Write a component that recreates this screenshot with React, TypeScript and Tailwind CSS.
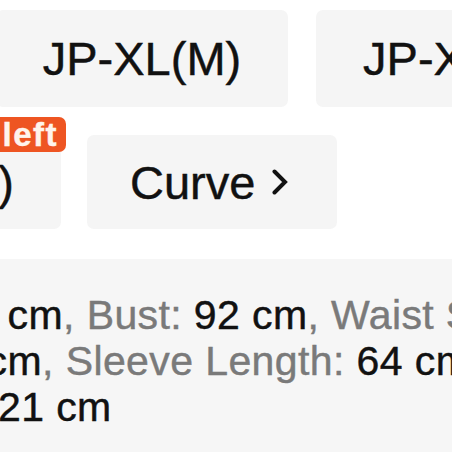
import { ReactNode } from "react";

const SANS = "font-['Liberation_Sans',Arial,Helvetica,sans-serif]";

function Label({ children }: { children: ReactNode }) {
  return <span className="text-[#7a7a7a]">{children}</span>;
}

function Value({ children }: { children: ReactNode }) {
  return <span className="text-[#111]">{children}</span>;
}

function SizeButton({ label, className = "" }: { label: string; className?: string }) {
  return (
    <div
      className={`shrink-0 flex items-center justify-center rounded-[7px] bg-[#f5f5f5] text-[47px] leading-none text-[#111] ${className}`}
    >
      {label}
    </div>
  );
}

function Chevron() {
  return (
    <svg width="16" height="26" viewBox="0 0 16 26" fill="none">
      <polyline
        points="2.5,2.5 13,13 2.5,23.5"
        stroke="#111"
        strokeWidth="4"
        strokeLinecap="round"
        strokeLinejoin="miter"
      />
    </svg>
  );
}

export default function App() {
  return (
    <div
      className={`w-[452px] h-[452px] overflow-hidden bg-white ${SANS} [-webkit-text-stroke:0.45px_currentColor]`}
    >
      <div className="pt-[10px] flex flex-col gap-[28px]">
        {/* size row */}
        <div className="flex gap-[28px] -ml-[4px]">
          <SizeButton label="JP-XL(M)" className="w-[292px] h-[97px]" />
          <SizeButton label="JP-XXL(L)" className="w-[311px] h-[97px]" />
        </div>

        {/* second row: low-stock size + curve link */}
        <div className="flex gap-[26px] -ml-[250px]">
          <div className="relative shrink-0">
            <SizeButton label="JP-XXL(L)" className="w-[311px] h-[94px]" />
            <span className="absolute -top-[18px] -right-[5px] h-[35px] flex items-center rounded-[7px] bg-[#ee5522] pl-[9px] pr-[8px] text-[33px] font-bold leading-none tracking-[1.5px] text-[#fff4ec] whitespace-nowrap">
              Only 1 left
            </span>
          </div>
          <div className="shrink-0 w-[250px] h-[94px] flex items-center gap-[17px] rounded-[7px] bg-[#f5f5f5] pl-[43px] text-[47px] leading-none text-[#111]">
            <span>Curve</span>
            <Chevron />
          </div>
        </div>
      </div>

      {/* measurements */}
      <div className="mt-[30px] h-[200px] bg-[#f6f6f6] pt-[33px]">
        <div className="-ml-[202px] text-[41px] leading-[46px] tracking-[0.4px] whitespace-nowrap">
          <div>
            <Label>Length: </Label>
            <Value>68 cm</Value>
            <Label>, Bust: </Label>
            <Value>92 cm</Value>
            <Label>, Waist Size: </Label>
            <Value>76 cm</Value>
          </div>
          <div>
            <Label>Hips: </Label>
            <Value>104 cm</Value>
            <Label>, Sleeve Length: </Label>
            <Value>64 cm</Value>
            <Label>,</Label>
          </div>
          <div>
            <Label>Hemline: </Label>
            <Value>121 cm</Value>
          </div>
        </div>
      </div>
    </div>
  );
}
